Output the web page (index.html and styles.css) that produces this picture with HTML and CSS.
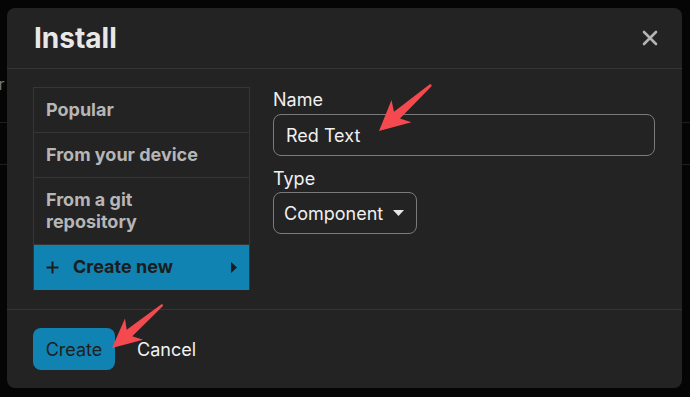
FILE: index.html
```html
<!DOCTYPE html>
<html lang="en">
<head>
    <meta charset="UTF-8">
    <meta name="viewport" content="width=device-width, initial-scale=1.0">
    <title>Install</title>
    <link rel="stylesheet" href="styles.css">
</head>
<body>
    <!-- page behind the dialog, only its edges show -->
    <div class="fondo">
        <div class="fondo-texto">Header</div>
        <div class="fondo-fila"></div>
        <div class="fondo-fila"></div>
    </div>

    <div class="modal">
        <div class="modal-cabecera">
            <h1>Install</h1>
            <svg class="cerrar" width="16" height="16" viewBox="0 0 16 16">
                <path d="M2 2 L14 14 M14 2 L2 14" stroke="#b4b4b4" stroke-width="2.6" stroke-linecap="round"/>
            </svg>
        </div>

        <div class="modal-cuerpo">
            <div class="lista">
                <div class="item">Popular</div>
                <div class="item">From your device</div>
                <div class="item">From a git<br>repository</div>
                <div class="item activo">
                    <svg class="mas" width="13" height="13" viewBox="0 0 13 13">
                        <path d="M6.5 0.5 V12.5 M0.5 6.5 H12.5" stroke="#1c1c1c" stroke-width="2"/>
                    </svg>
                    <span class="item-texto">Create new</span>
                    <svg class="flecha" width="6" height="11" viewBox="0 0 6 11">
                        <path d="M0 0 L6 5.5 L0 11 Z" fill="#1c1c1c"/>
                    </svg>
                </div>
            </div>

            <div class="formulario">
                <label class="etiqueta">Name</label>
                <div class="campo">Red Text</div>

                <label class="etiqueta etiqueta-tipo">Type</label>
                <div class="selector">
                    <span>Component</span>
                    <svg width="11" height="6" viewBox="0 0 11 6">
                        <path d="M0 0 H11 L5.5 6 Z" fill="#e6e6e6"/>
                    </svg>
                </div>
            </div>
        </div>

        <div class="modal-pie">
            <button class="boton-crear">Create</button>
            <button class="boton-cancelar">Cancel</button>
        </div>
    </div>

    <!-- flechas rojas de la captura -->
    <svg class="anotaciones" width="690" height="397" viewBox="0 0 690 397">
        <polygon transform="translate(379,131) rotate(-41.5)" points="0,0 30,-15 24,-4.5 69,-1.3 70,0 69,1.3 24,4.5 30,15" fill="#f4494f"/>
        <polygon transform="translate(112,348) rotate(-40.5)" points="0,0 29,-14 23,-4.3 66,-1.2 67,0 66,1.2 23,4.3 29,14" fill="#f4494f"/>
    </svg>
</body>
</html>
```

FILE: styles.css
```css
body {
    margin: 0;
    width: 690px;
    height: 397px;
    overflow: hidden;
    background-color: #050505;
    font-family: 'Inter', 'Noto Sans', sans-serif;
    position: relative;
}

.fondo {
    padding-top: 74px;
}

.fondo-texto {
    margin-left: -51px;
    font-size: 16px;
    color: #777;
    height: 48px;
}

.fondo-fila {
    height: 41px;
    border-top: 1px solid #1e1e1e;
}

.modal {
    position: absolute;
    left: 7px;
    top: 8px;
    width: 675px;
    height: 380px;
    background-color: #232323;
    border-radius: 8px;
    display: flex;
    flex-direction: column;
}

.modal-cabecera {
    height: 60px;
    border-bottom: 1px solid #343434;
    display: flex;
    align-items: center;
    justify-content: space-between;
    padding: 0 24px 0 27px;
}

.modal-cabecera h1 {
    margin: 0;
    font-size: 28px;
    font-weight: 700;
    color: #e8e8e8;
}

.modal-cuerpo {
    display: flex;
    padding: 18px 27px 0 26px;
    height: 222px;
    border-bottom: 1px solid #343434;
}

.lista {
    width: 215px;
    height: 201px;
    border: 1px solid #363636;
    align-self: flex-start;
}

.item {
    padding: 11px 12px;
    font-size: 18px;
    line-height: 22px;
    font-weight: 700;
    color: #b6b6b6;
    border-bottom: 1px solid #363636;
}

.item.activo {
    border-bottom: none;
    background-color: #1083b2;
    color: #1c1c1c;
    display: flex;
    align-items: center;
    padding-bottom: 12px;
}

.mas {
    margin-right: 14px;
}

.item-texto {
    flex: 1;
}

.formulario {
    flex: 1;
    margin-left: 23px;
    display: flex;
    flex-direction: column;
    align-items: flex-start;
}

.etiqueta {
    font-size: 18px;
    line-height: 22px;
    color: #f0f0f0;
    margin: 2px 0 3px;
}

.etiqueta-tipo {
    margin-top: 12px;
    margin-bottom: 2px;
}

.campo {
    box-sizing: border-box;
    width: 100%;
    height: 42px;
    border: 1px solid #7a7a7a;
    border-radius: 8px;
    padding: 0 12px;
    font-size: 18px;
    color: #f0f0f0;
    display: flex;
    align-items: center;
}

.selector {
    box-sizing: border-box;
    height: 42px;
    width: 144px;
    border: 1px solid #7a7a7a;
    border-radius: 8px;
    padding: 0 12px 0 10px;
    font-size: 18px;
    color: #f0f0f0;
    display: flex;
    align-items: center;
    justify-content: space-between;
}

.modal-pie {
    display: flex;
    align-items: center;
    gap: 22px;
    padding: 18px 26px;
}

.boton-crear {
    width: 82px;
    height: 42px;
    border: none;
    border-radius: 8px;
    background-color: #1083b2;
    color: #1f1f1f;
    font-family: inherit;
    font-size: 18px;
}

.boton-cancelar {
    border: none;
    background: none;
    padding: 0;
    color: #f2f2f2;
    font-family: inherit;
    font-size: 18px;
}

.anotaciones {
    position: absolute;
    left: 0;
    top: 0;
}
```
